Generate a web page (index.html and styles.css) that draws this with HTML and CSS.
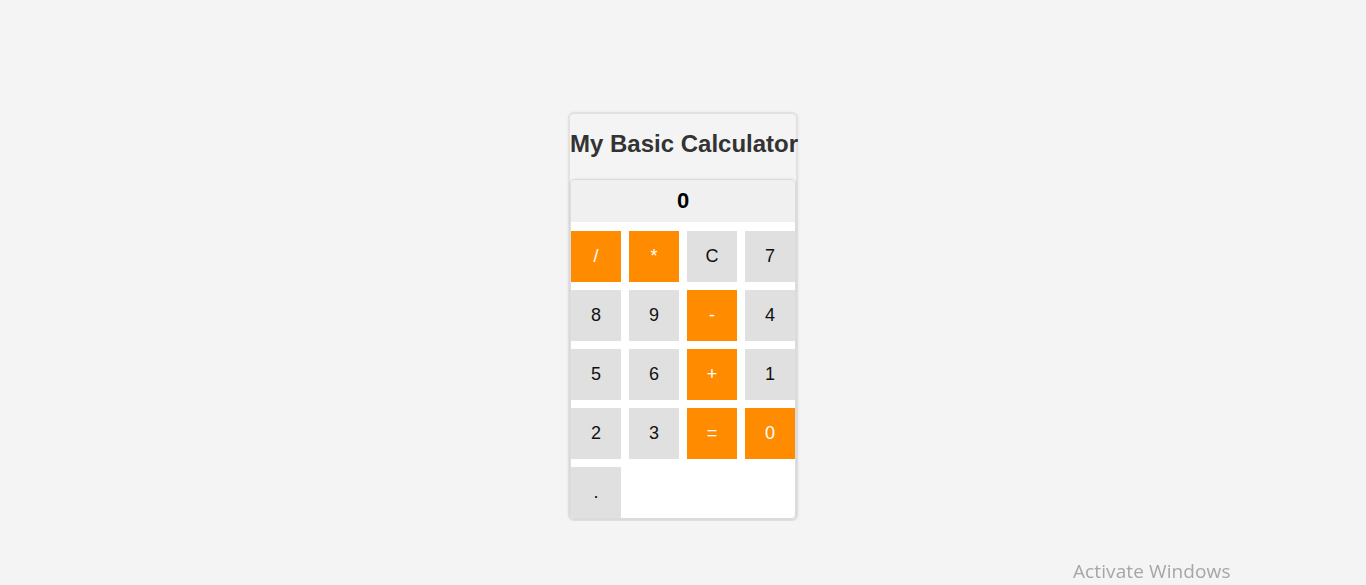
FILE: index.html
```html
<!DOCTYPE html>
<html lang="en">
<head>
<meta charset="utf-8">
<title>My Basic Calculator</title>
<link rel="stylesheet" href="styles.css">
</head>
<body>
<main class="page">
  <section class="card">
    <h2 class="title">My Basic Calculator</h2>
    <div class="calc">
      <div class="display">0</div>
      <div class="keys">
        <button class="key op">/</button>
        <button class="key op">*</button>
        <button class="key">C</button>
        <button class="key">7</button>
        <button class="key">8</button>
        <button class="key">9</button>
        <button class="key op">-</button>
        <button class="key">4</button>
        <button class="key">5</button>
        <button class="key">6</button>
        <button class="key op">+</button>
        <button class="key">1</button>
        <button class="key">2</button>
        <button class="key">3</button>
        <button class="key op">=</button>
        <button class="key op">0</button>
        <button class="key">.</button>
      </div>
    </div>
  </section>
</main>
<div class="watermark">Activate Windows</div>
</body>
</html>
```
FILE: styles.css
```css
html, body {
  margin: 0;
  padding: 0;
  background: #f4f4f4;
  font-family: "Liberation Sans", Arial, sans-serif;
}
.page {
  display: flex;
  justify-content: center;
  padding-top: 112px;
}
.card {
  width: 226px;
  border: 2px solid #e2e2e2;
  border-radius: 6px;
  background: #f4f4f4;
  box-shadow: 0 0 3px rgba(0,0,0,0.06);
}
.title {
  margin: 16px 0 21px;
  font-size: 24px;
  font-weight: bold;
  color: #333;
  text-align: center;
  white-space: nowrap;
}
.calc {
  border: 1px solid #dcdcdc;
  border-radius: 5px;
  background: #fff;
  overflow: hidden;
  box-shadow: 0 0 3px rgba(0,0,0,0.1);
}
.display {
  height: 42px;
  background: #f0f0f0;
  display: flex;
  align-items: center;
  justify-content: center;
  font-size: 22px;
  font-weight: bold;
  color: #000;
}
.keys {
  margin-top: 9px;
  display: grid;
  grid-template-columns: repeat(4, 50px);
  grid-auto-rows: 51px;
  gap: 8px;
}
.key {
  border: none;
  margin: 0;
  padding: 0;
  background: #e0e0e0;
  color: #111;
  font-family: "Liberation Sans", Arial, sans-serif;
  font-size: 18px;
}
.key.op {
  background: #ff8c00;
  color: #fff;
}
.watermark {
  position: fixed;
  left: 1073px;
  top: 558px;
  font-family: "Open Sans", "Noto Sans", sans-serif;
  font-size: 19px;
  color: #a6a6a6;
  letter-spacing: 0.1px;
}
```
